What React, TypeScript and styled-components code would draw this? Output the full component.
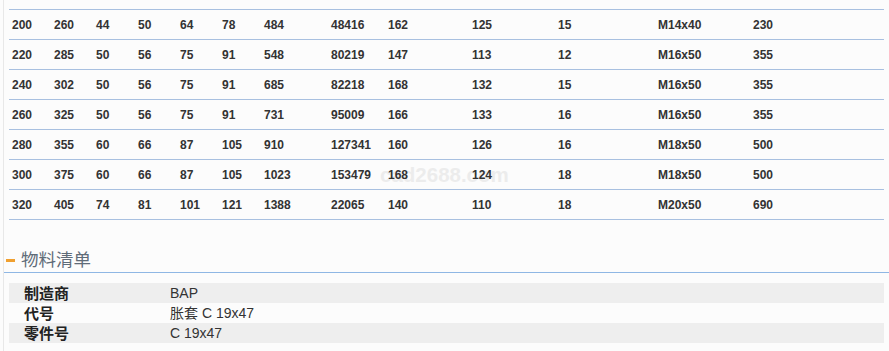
import styled, { createGlobalStyle } from "styled-components";

const GlobalStyle = createGlobalStyle`
  html, body {
    margin: 0;
    padding: 0;
    background: #fcfcfc;
  }
  body {
    font-family: "Liberation Sans", Arial, "Noto Sans CJK SC", sans-serif;
    color: #333;
  }
`;

const Page = styled.div`
  position: relative;
  margin-left: 3px;
  border-left: 1px solid #e8e8e8;
  min-height: 351px;
  overflow: hidden;
`;

const Watermark = styled.div`
  position: absolute;
  left: 376px;
  top: 163px;
  font-size: 20.5px;
  font-weight: bold;
  color: #ececec;
  pointer-events: none;
  z-index: 0;
`;

const DataTable = styled.table`
  position: relative;
  z-index: 1;
  border-collapse: collapse;
  table-layout: fixed;
  width: 875px;
  margin: 9px 0 0 5px;
`;

const Row = styled.tr`
  border-top: 1px solid #a8c0e0;
  border-bottom: 1px solid #a8c0e0;
`;

const Cell = styled.td`
  height: 29px;
  padding: 0 0 0 3px;
  font-size: 12px;
  font-weight: bold;
  color: #333;
  white-space: nowrap;
  vertical-align: middle;
`;

const SectionTitle = styled.div`
  display: flex;
  align-items: flex-end;
  height: 49px;
  padding-bottom: 3px;
  border-bottom: 1px solid #8fb7e4;
`;

const Dash = styled.span`
  width: 9px;
  height: 3px;
  margin: 0 6px 7px 2px;
  background: #f0a030;
`;

const TitleText = styled.span`
  font-family: "Noto Sans CJK SC", sans-serif;
  font-size: 17.5px;
  line-height: 20px;
  color: #5f6b78;
`;

const InfoTable = styled.table`
  border-collapse: collapse;
  table-layout: fixed;
  width: 875px;
  margin: 10px 0 0 5px;
`;

const InfoRow = styled.tr<{ $shade: boolean }>`
  background: ${(p) => (p.$shade ? "#eeeeee" : "transparent")};
`;

const Label = styled.td`
  width: 146px;
  height: 20px;
  padding: 0 0 0 15px;
  font-family: "Noto Sans CJK SC", sans-serif;
  font-size: 15px;
  font-weight: bold;
  line-height: 20px;
  color: #222;
`;

const Value = styled.td`
  padding: 0;
  font-family: "Liberation Sans", Arial, "Noto Sans CJK SC", sans-serif;
  font-size: 14px;
  line-height: 20px;
  color: #333;
`;

const colWidths = [42, 42, 42, 42, 42, 42, 67, 57, 84, 86, 100, 95, 134];

const rows = [
  ["200", "260", "44", "50", "64", "78", "484", "48416", "162", "125", "15", "M14x40", "230"],
  ["220", "285", "50", "56", "75", "91", "548", "80219", "147", "113", "12", "M16x50", "355"],
  ["240", "302", "50", "56", "75", "91", "685", "82218", "168", "132", "15", "M16x50", "355"],
  ["260", "325", "50", "56", "75", "91", "731", "95009", "166", "133", "16", "M16x50", "355"],
  ["280", "355", "60", "66", "87", "105", "910", "127341", "160", "126", "16", "M18x50", "500"],
  ["300", "375", "60", "66", "87", "105", "1023", "153479", "168", "124", "18", "M18x50", "500"],
  ["320", "405", "74", "81", "101", "121", "1388", "22065", "140", "110", "18", "M20x50", "690"],
];

const bom = [
  ["制造商", "BAP"],
  ["代号", "胀套 C 19x47"],
  ["零件号", "C 19x47"],
];

export default function App() {
  return (
    <>
      <GlobalStyle />
      <Page>
        <Watermark>cad2688.com</Watermark>
        <DataTable>
          <colgroup>
            {colWidths.map((w, i) => (
              <col key={i} style={{ width: w }} />
            ))}
          </colgroup>
          <tbody>
            {rows.map((r, i) => (
              <Row key={i}>
                {r.map((c, j) => (
                  <Cell key={j}>{c}</Cell>
                ))}
                <Cell />
              </Row>
            ))}
          </tbody>
        </DataTable>
        <SectionTitle>
          <Dash />
          <TitleText>物料清单</TitleText>
        </SectionTitle>
        <InfoTable>
          <tbody>
            {bom.map(([k, v], i) => (
              <InfoRow key={k} $shade={i % 2 === 0}>
                <Label>{k}</Label>
                <Value>{v}</Value>
              </InfoRow>
            ))}
          </tbody>
        </InfoTable>
      </Page>
    </>
  );
}
